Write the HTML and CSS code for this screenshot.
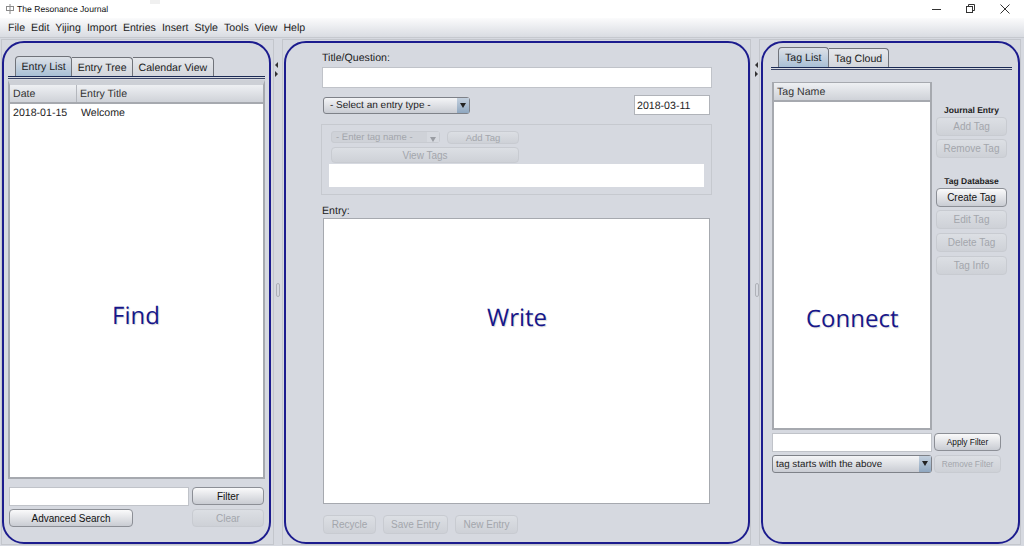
FILE: index.html
```html
<!DOCTYPE html>
<html lang="en">
<head>
    <meta charset="UTF-8">
    <meta name="viewport" content="width=device-width, initial-scale=1.0">
    <title>The Resonance Journal</title>
    <link rel="stylesheet" href="styles.css">
</head>
<body>
    <div class="titlebar">
        <svg class="app-icon" width="10" height="10" viewBox="0 0 10 10" fill="none" stroke="#8a8a8a" stroke-width="1">
            <rect x="1.5" y="2.5" width="7" height="4"/>
            <path d="M5 0v10"/>
        </svg>
        <span class="app-name">The Resonance Journal</span>
        <div class="win-controls">
            <svg width="10" height="10" viewBox="0 0 10 10" fill="none" stroke="#333" stroke-width="1"><path d="M0 5.5h9"/></svg>
            <svg width="10" height="10" viewBox="0 0 10 10" fill="none" stroke="#333" stroke-width="1"><rect x="0.5" y="2.5" width="6" height="6"/><path d="M2.5 2.5v-2h6v6h-2"/></svg>
            <svg width="10" height="10" viewBox="0 0 10 10" fill="none" stroke="#333" stroke-width="1"><path d="M0.5 0.5l9 9M9.5 0.5l-9 9"/></svg>
        </div>
    </div>
    <div class="menubar">
        <span>File</span><span>Edit</span><span>Yijing</span><span>Import</span><span>Entries</span>
        <span>Insert</span><span>Style</span><span>Tools</span><span>View</span><span>Help</span>
    </div>

    <div class="panes">
        <div class="pane pane-find">
            <div class="card card-find">
                <div class="tabs tabs-find">
                    <div class="tab active">Entry List</div>
                    <div class="tab">Entry Tree</div>
                    <div class="tab">Calendar View</div>
                </div>
                <div class="tab-line"></div>
                <div class="table">
                    <div class="thead">
                        <div class="th th-date">Date</div>
                        <div class="th">Entry Title</div>
                    </div>
                    <div class="row">
                        <div class="td-date">2018-01-15</div>
                        <div>Welcome</div>
                    </div>
                </div>
                <div class="find-footer">
                    <div class="field"></div>
                    <button class="btn">Filter</button>
                    <button class="btn btn-search">Advanced Search</button>
                    <button class="btn off">Clear</button>
                </div>
                <div class="big-label label-find">Find</div>
            </div>
        </div>

        <div class="splitter"><i class="arrow-left"></i><i class="arrow-right"></i><b class="grip"></b></div>

        <div class="pane pane-write">
            <div class="card card-write">
                <label class="lbl">Title/Question:</label>
                <div class="field field-title"></div>
                <div class="type-row">
                    <div class="combo combo-type">
                        <span>- Select an entry type -</span>
                        <i class="combo-arrow"></i>
                    </div>
                    <div class="date-field">2018-03-11</div>
                </div>
                <div class="tag-group">
                    <div class="tag-controls">
                        <div class="combo combo-tag off">
                            <span>- Enter tag name -</span>
                            <i class="combo-arrow"></i>
                        </div>
                        <button class="btn off btn-add">Add Tag</button>
                        <button class="btn off btn-view">View Tags</button>
                    </div>
                    <div class="tag-box"></div>
                </div>
                <label class="lbl lbl-entry">Entry:</label>
                <div class="entry-box"></div>
                <div class="entry-actions">
                    <button class="btn off">Recycle</button>
                    <button class="btn off">Save Entry</button>
                    <button class="btn off">New Entry</button>
                </div>
                <div class="big-label label-write">Write</div>
            </div>
        </div>

        <div class="splitter splitter-right"><i class="arrow-left"></i><i class="arrow-right"></i><b class="grip"></b></div>

        <div class="pane pane-connect">
            <div class="card card-connect">
                <div class="tabs tabs-connect">
                    <div class="tab active">Tag List</div>
                    <div class="tab">Tag Cloud</div>
                </div>
                <div class="tab-line"></div>
                <div class="connect-main">
                    <div class="table table-tags">
                        <div class="thead"><div class="th">Tag Name</div></div>
                    </div>
                    <div class="tag-side">
                        <h4>Journal Entry</h4>
                        <button class="btn off">Add Tag</button>
                        <button class="btn off">Remove Tag</button>
                        <h4 class="second">Tag Database</h4>
                        <button class="btn">Create Tag</button>
                        <button class="btn off">Edit Tag</button>
                        <button class="btn off">Delete Tag</button>
                        <button class="btn off">Tag Info</button>
                    </div>
                </div>
                <div class="connect-filter">
                    <div class="field"></div>
                    <button class="btn small">Apply Filter</button>
                    <div class="combo combo-filter">
                        <span>tag starts with the above</span>
                        <i class="combo-arrow"></i>
                    </div>
                    <button class="btn small off">Remove Filter</button>
                </div>
                <div class="big-label label-connect">Connect</div>
            </div>
        </div>
    </div>
</body>
</html>
```

FILE: styles.css
```css
* {
    box-sizing: border-box;
}
html, body {
    height: 546px;
    overflow: hidden;
}
body {
    margin: 0;
    background-color: #d6d9e0;
    font-family: "Liberation Sans", Arial, sans-serif;
    font-size: 10.6px;
    color: #222;
    text-rendering: geometricPrecision;
}

/* window chrome */
.titlebar {
    position: relative;
    height: 18px;
    background-color: #fff;
    display: flex;
    align-items: center;
    padding-left: 5px;
    font-size: 8.6px;
    color: #111;
}
.titlebar::before {
    content: "";
    position: absolute;
    left: 150px;
    top: 0;
    width: 10px;
    height: 4px;
    background-color: #f0f0f0;
}
.app-name {
    margin-left: 2px;
}
.win-controls {
    margin-left: auto;
    display: flex;
    gap: 24px;
    padding-right: 14px;
}
.menubar {
    height: 20px;
    background: linear-gradient(#fbfbfc, #d9dce2);
    border-bottom: 1px solid #c6c9cf;
    display: flex;
    align-items: center;
    gap: 6px;
    padding-left: 8px;
    padding-top: 1px;
}

/* three panes */
.panes {
    height: 508px;
    padding: 1px 0 0 1px;
    display: flex;
}
.pane {
    border: 1px solid #c3c6cc;
    height: 506px;
    padding-top: 1px;
}
.pane-find {
    width: 273px;
}
.pane-write {
    width: 469px;
    padding-left: 1px;
}
.pane-connect {
    width: 262px;
    padding-left: 1px;
}
.splitter {
    width: 8px;
    position: relative;
}
.arrow-left, .arrow-right {
    position: absolute;
    left: 1px;
    width: 0;
    height: 0;
    border-top: 3px solid transparent;
    border-bottom: 3px solid transparent;
}
.arrow-left {
    top: 23px;
    border-right: 3px solid #333;
}
.arrow-right {
    top: 32px;
    border-left: 3px solid #333;
}
.grip {
    position: absolute;
    left: 2px;
    top: 244px;
    width: 4px;
    height: 14px;
    border: 1px solid #aeb1b8;
    border-radius: 2px;
}
.splitter-right .arrow-left, .splitter-right .arrow-right {
    left: 4px;
}
.splitter-right .grip {
    left: 4px;
}
.card {
    position: relative;
    height: 503px;
    border: 2px solid #1c1c8e;
    border-radius: 22px;
    display: flex;
    flex-direction: column;
}
.card-find {
    width: 269px;
    padding: 13px 4px 15px;
}
.card-write {
    width: 466px;
    padding: 6px 36px 7px;
}
.card-connect {
    width: 259px;
    padding: 4px 6px 0 8px;
}
.big-label {
    position: absolute;
    font-family: "Open Sans", sans-serif;
    font-size: 24px;
    color: #17178a;
    text-shadow: 1px 1px 1px rgba(0,0,0,0.15);
    line-height: 30px;
}
.label-find {
    left: 108px;
    top: 258px;
}
.label-write {
    left: 201px;
    top: 260px;
}
.label-connect {
    left: 43px;
    top: 261px;
}

/* tabs */
.tabs {
    display: flex;
    height: 20px;
    align-items: flex-end;
}
.tabs-find {
    margin-left: 7px;
}
.tabs-connect {
    margin-left: 7px;
}
.tab {
    height: 19px;
    padding: 0 5.5px;
    border: 1px solid #70737a;
    border-bottom: 0;
    border-left-width: 0;
    border-radius: 0 4px 0 0;
    line-height: 20px;
    background: linear-gradient(#e6e8ec, #d3d6dc);
}
.tabs-connect .tab {
    padding: 0 6px;
}
.tab.active {
    height: 20px;
    border-left-width: 1px;
    border-radius: 4px 4px 0 0;
    background: linear-gradient(#dde1e7, #a9c0d6);
}
.tab-line {
    height: 3px;
    border-top: 1px solid #1b2a55;
    border-bottom: 1px solid #3a4466;
    background-color: #d6d9e0;
}

/* tables */
.table {
    margin-top: 1px;
    flex: 1;
    border: 1px solid #b6b9bf;
    border-top-width: 5px;
    border-top-color: #cdd0d6;
    background-color: #fff;
    border-left: 2px solid #a6a9af;
    border-right: 2px solid #a6a9af;
    border-bottom: 2px solid #a6a9af;
}
.thead {
    display: flex;
    height: 19px;
    background: linear-gradient(#eef0f3, #cfd2d8);
    border-bottom: 2px solid #a6a9af;
}
.th {
    padding-left: 3px;
    line-height: 19px;
    color: #333;
}
.th-date {
    width: 67px;
    border-right: 1px solid #b4b7bd;
}
.row {
    display: flex;
    height: 17px;
    line-height: 18px;
}
.td-date {
    width: 68px;
    padding-left: 3px;
}
.row div:last-child {
    padding-left: 3px;
}

/* form controls */
.btn {
    font: inherit;
    font-size: 10px;
    color: #111;
    padding: 0;
    height: 19px;
    border: 1px solid #8c8f96;
    border-radius: 4px;
    background: linear-gradient(#fafafb, #c9ccd3);
}
.btn.off {
    color: #a3a6ac;
    border-color: #c8cbd1;
    background: linear-gradient(#dcdfe4, #ced1d7);
}
.btn.small {
    font-size: 8.3px;
    height: 18px;
}
.field {
    height: 19px;
    background-color: #fff;
    border: 1px solid #c0c3c9;
}
.combo {
    display: flex;
    align-items: center;
    justify-content: space-between;
    height: 17px;
    border: 1px solid #7e8188;
    border-radius: 3px;
    background: linear-gradient(#f4f5f7, #c9ccd3);
    padding-left: 6px;
    font-size: 10px;
}
.combo span {
    padding-top: 1px;
}
.combo-arrow {
    width: 12px;
    height: 100%;
    background: linear-gradient(#c3d0de, #8fa7c0) no-repeat;
    position: relative;
}
.combo-arrow::after {
    content: "";
    position: absolute;
    left: 3px;
    top: 5px;
    border-left: 3px solid transparent;
    border-right: 3px solid transparent;
    border-top: 5px solid #222;
}
.combo.off {
    color: #a3a6ac;
    border-color: #c8cbd1;
    background: #cfd2d8;
}
.combo.off .combo-arrow {
    background: #d6d9df;
}
.combo.off .combo-arrow::after {
    border-top-color: #9a9da3;
}

/* find pane */
.find-footer {
    margin-top: 8px;
    display: grid;
    grid-template-columns: 180px 72px;
    justify-content: space-between;
    padding: 0 1px;
    row-gap: 3px;
}
.btn-search {
    width: 124px;
}
.find-footer .btn {
    height: 18px;
}

/* write pane */
.lbl {
    display: block;
    height: 18px;
    line-height: 18px;
}
.field-title {
    height: 21px;
}
.type-row {
    margin-top: 7px;
    padding: 0 2px 0 1px;
    display: flex;
    justify-content: space-between;
    align-items: center;
    height: 20px;
}
.combo-type {
    width: 147px;
}
.date-field {
    width: 76px;
    height: 20px;
    background-color: #fff;
    border: 1px solid #b0b3b9;
    line-height: 20px;
    padding-left: 2px;
}
.tag-group {
    margin-top: 9px;
    margin-left: -1px;
    height: 71px;
    width: 391px;
    border: 1px solid #c6c9cf;
    padding: 6px 7px 0;
}
.tag-controls {
    display: grid;
    grid-template-columns: 109px 72px;
    column-gap: 7px;
    row-gap: 3px;
    margin-left: 2px;
}
.combo-tag {
    height: 12px;
    padding-left: 4px;
    font-size: 9.5px;
}
.btn-add {
    height: 13px;
    font-size: 9.5px;
}
.btn-view {
    grid-column: 1 / 3;
    height: 16px;
}
.tag-box {
    margin-top: 1px;
    height: 23px;
    background-color: #fff;
}
.lbl-entry {
    margin-top: 8px;
    height: 15px;
    line-height: 16px;
}
.entry-box {
    margin-left: 1px;
    width: 387px;
    height: 286px;
    background-color: #fff;
    border: 1px solid #a6a9af;
}
.entry-actions {
    margin-top: 11px;
    margin-left: 1px;
    display: flex;
    gap: 7px;
}
.entry-actions .btn:nth-child(1) {
    width: 53px;
}
.entry-actions .btn:nth-child(2) {
    width: 65px;
}
.entry-actions .btn:nth-child(3) {
    width: 63px;
}

/* connect pane */
.connect-main {
    margin-top: 10px;
    margin-left: 1px;
    height: 353px;
    display: flex;
    gap: 4px;
}
.table-tags {
    margin-top: 2px;
    margin-bottom: 3px;
    width: 160px;
    flex: none;
    border-top-width: 1px;
    border-top-color: #a6a9af;
}
.tag-side {
    width: 71px;
    display: flex;
    flex-direction: column;
    padding-top: 26px;
    gap: 3.67px;
}
.tag-side h4 {
    margin: 0 0 -2px;
    font-size: 8.5px;
    text-align: center;
    height: 9px;
    line-height: 9px;
}
.tag-side .second {
    margin-top: 15px;
}
.connect-filter {
    margin-left: 1px;
    display: grid;
    grid-template-columns: 160px 67px;
    column-gap: 2px;
    row-gap: 3px;
}
.combo-filter {
    height: 18px;
    padding-left: 3px;
    font-size: 9.8px;
}
```
